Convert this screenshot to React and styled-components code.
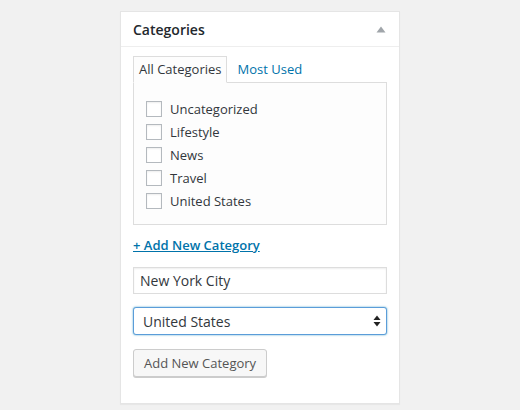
import React from "react";
import styled, { createGlobalStyle } from "styled-components";

const Global = createGlobalStyle`
  html, body { margin: 0; padding: 0; background: #f1f1f1; }
  body { font-family: "Open Sans", "Liberation Sans", sans-serif; color: #32373c; }
  * { box-sizing: border-box; }
`;

const Page = styled.div`
  padding: 11px 0 0 120px;
  height: 410px;
`;

const Postbox = styled.div`
  width: 280px;
  height: 393px;
  background: #fff;
  border: 1px solid #e5e5e5;
  box-shadow: 0 1px 1px rgba(0, 0, 0, 0.04);
  display: flex;
  flex-direction: column;
`;

const Header = styled.div`
  height: 35px;
  border-bottom: 1px solid #eee;
  display: flex;
  align-items: center;
  justify-content: space-between;
  padding: 0 13px 0 12px;
`;

const Title = styled.h2`
  margin: 0;
  font-size: 14px;
  font-weight: 600;
  color: #23282d;
  line-height: 1;
  padding-top: 1px;
`;

const Inside = styled.div`
  padding: 9px 12px 12px;
  display: flex;
  flex-direction: column;
`;

const Tabs = styled.ul`
  list-style: none;
  margin: 0;
  padding: 0;
  display: flex;
  align-items: flex-end;
  margin-bottom: -1px;
  position: relative;
  z-index: 1;
`;

const Tab = styled.li`
  height: 27px;
  display: flex;
  align-items: center;
  padding: 0 5px 1px 5px;
  font-size: 13px;
  margin-right: 4px;
  color: ${(p) => (p.$active ? "#32373c" : "#0073aa")};
  background: ${(p) => (p.$active ? "#fdfdfd" : "transparent")};
  border: 1px solid ${(p) => (p.$active ? "#ddd" : "transparent")};
  border-bottom-color: ${(p) => (p.$active ? "#fdfdfd" : "transparent")};
`;

const Panel = styled.div`
  height: 143px;
  border: 1px solid #ddd;
  background: #fdfdfd;
  padding: 18px 12px 0 12px;
`;

const List = styled.ul`
  list-style: none;
  margin: 0;
  padding: 0;
  display: flex;
  flex-direction: column;
  gap: 7px;
`;

const Item = styled.li`
  display: flex;
  align-items: center;
  gap: 8px;
  height: 16px;
  font-size: 13px;
  color: #32373c;
`;

const Check = styled.span`
  width: 16px;
  height: 16px;
  border: 1px solid #b4b9be;
  background: #fff;
  box-shadow: inset 0 1px 2px rgba(0, 0, 0, 0.07);
  flex: none;
`;

const AddLink = styled.a`
  margin-top: 12px;
  font-size: 13px;
  font-weight: 600;
  color: #0073aa;
  text-decoration: underline;
  line-height: 16px;
  align-self: flex-start;
`;

const TextInput = styled.div`
  margin-top: 14px;
  height: 27px;
  border: 1px solid #ddd;
  background: #fff;
  box-shadow: inset 0 1px 2px rgba(0, 0, 0, 0.07);
  display: flex;
  align-items: center;
  padding: 0 6px;
  font-size: 14px;
  color: #32373c;
`;

const SelectBox = styled.div`
  margin-top: 13px;
  height: 28px;
  border: 1px solid #5b9dd9;
  border-radius: 3px;
  box-shadow: 0 0 2px rgba(30, 140, 190, 0.8);
  background: #fff;
  display: flex;
  align-items: center;
  justify-content: space-between;
  padding: 0 5px 0 9px;
  font-size: 14px;
  color: #32373c;
`;

const Button = styled.button`
  margin-top: 14px;
  align-self: flex-start;
  height: 28px;
  padding: 0 10px;
  font-family: inherit;
  font-size: 13px;
  color: #555;
  background: #f7f7f7;
  border: 1px solid #ccc;
  border-radius: 3px;
  box-shadow: 0 1px 0 #ccc;
`;

const Toggle = () => (
  <svg width="10" height="7" viewBox="0 0 10 7">
    <path d="M5 0.5 L9.5 6.5 L0.5 6.5 Z" fill="#a0a5aa" />
  </svg>
);

const UpDown = () => (
  <svg width="8" height="12" viewBox="0 0 8 12">
    <path d="M4 0.5 L7.5 5 L0.5 5 Z" fill="#222" />
    <path d="M4 11.5 L7.5 7 L0.5 7 Z" fill="#222" />
  </svg>
);

const categories = ["Uncategorized", "Lifestyle", "News", "Travel", "United States"];

export default function App() {
  return (
    <>
      <Global />
      <Page>
        <Postbox>
          <Header>
            <Title>Categories</Title>
            <Toggle />
          </Header>
          <Inside>
            <Tabs>
              <Tab $active>All Categories</Tab>
              <Tab>Most Used</Tab>
            </Tabs>
            <Panel>
              <List>
                {categories.map((c) => (
                  <Item key={c}>
                    <Check />
                    {c}
                  </Item>
                ))}
              </List>
            </Panel>
            <AddLink href="#">+ Add New Category</AddLink>
            <TextInput>New York City</TextInput>
            <SelectBox>
              United States
              <UpDown />
            </SelectBox>
            <Button>Add New Category</Button>
          </Inside>
        </Postbox>
      </Page>
    </>
  );
}
